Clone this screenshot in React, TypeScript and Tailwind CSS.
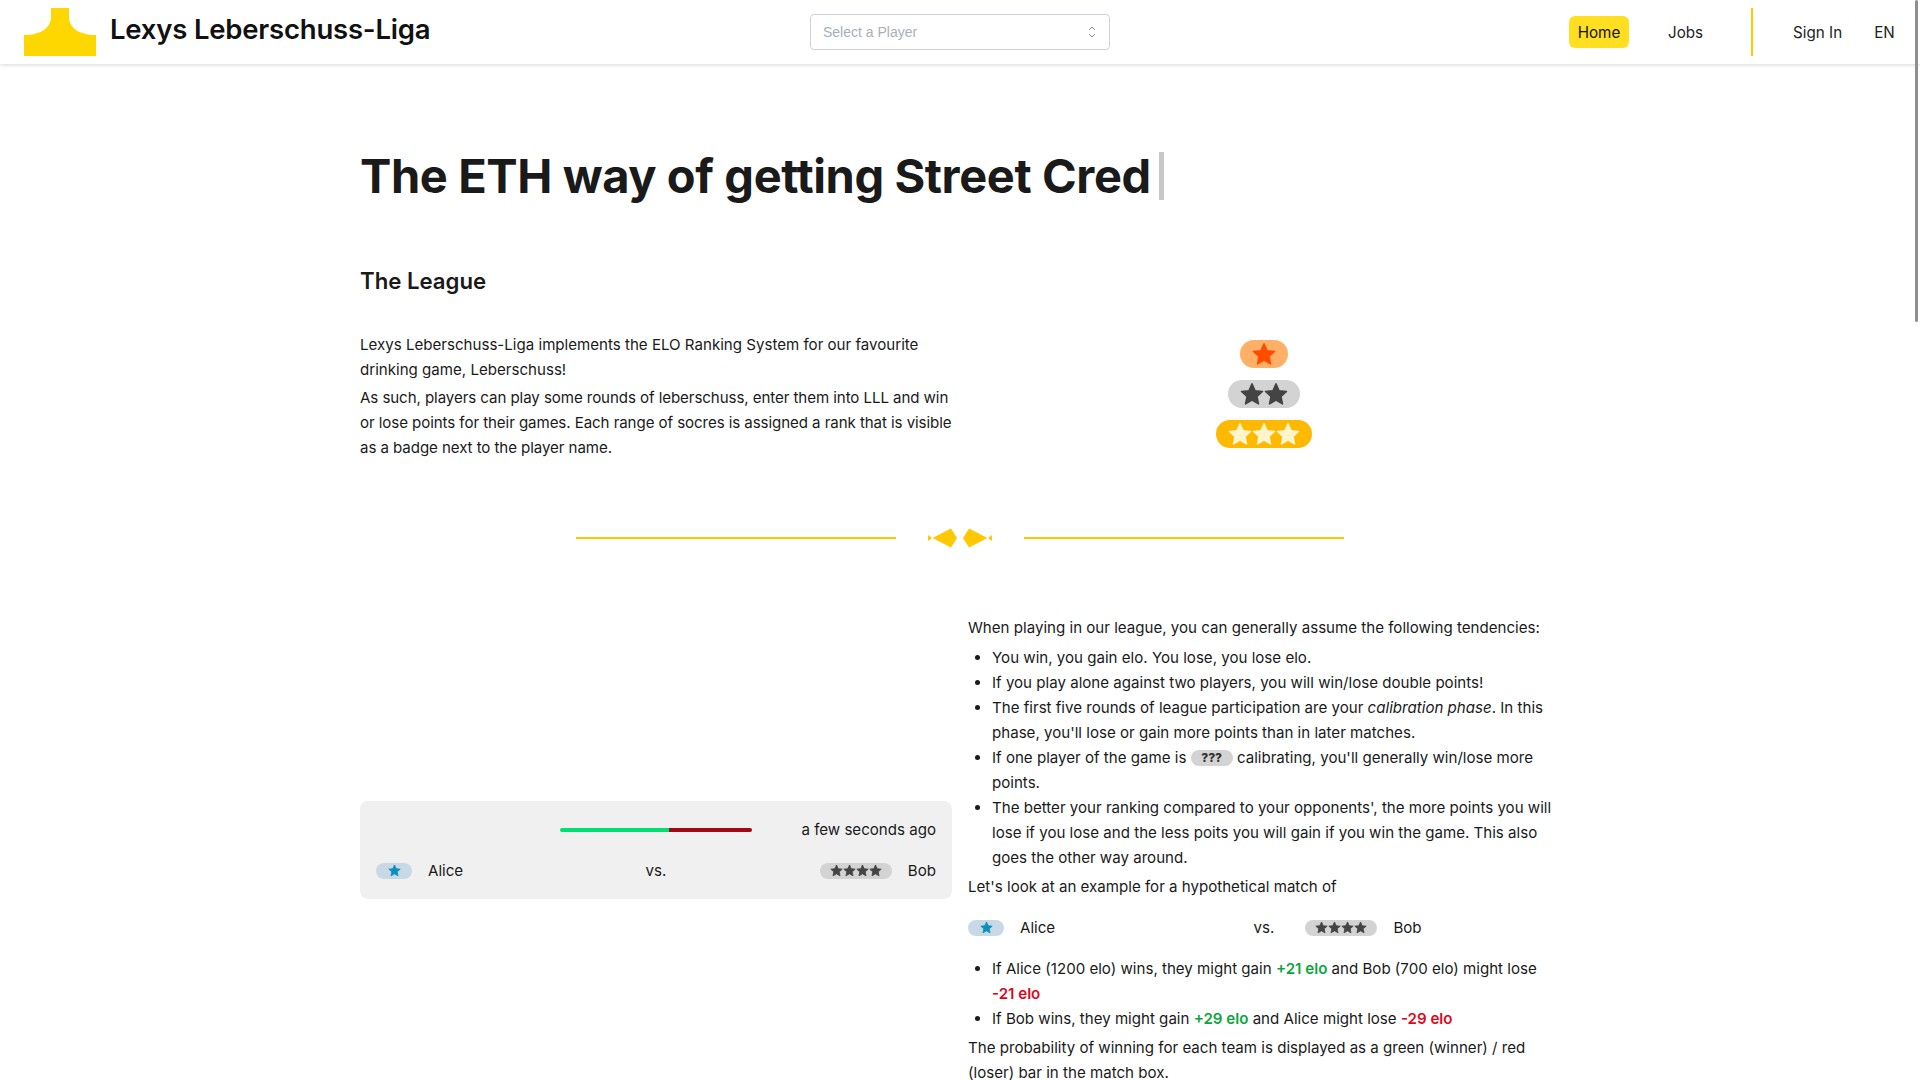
import React from "react";

const STAR = "M12 1.8l3.1 6.9 7.4.8-5.5 5 1.5 7.4L12 18.2l-6.5 3.7 1.5-7.4-5.5-5 7.4-.8z";

function Star({ size, color }: { size: number; color: string }) {
  return (
    <svg width={size} height={size} viewBox="0 0 24 24" className="block shrink-0">
      <path d={STAR} fill={color} stroke={color} strokeWidth="1.5" strokeLinejoin="round" />
    </svg>
  );
}

function BigBadge({ n, bg, color, w }: { n: number; bg: string; color: string; w: string }) {
  return (
    <div className={`flex h-7 items-center justify-center rounded-full ${bg} ${w}`}>
      {Array.from({ length: n }).map((_, i) => (
        <Star key={i} size={24} color={color} />
      ))}
    </div>
  );
}

function Alice() {
  return (
    <div className="flex items-center">
      <span className="flex h-4 w-9 items-center justify-center rounded-full bg-[#c9d8e5]">
        <Star size={13} color="#0b8fbd" />
      </span>
      <span className="ml-4">Alice</span>
    </div>
  );
}

function Bob() {
  return (
    <div className="flex items-center">
      <span className="flex h-4 w-[72px] items-center justify-center rounded-full bg-[#d3d3d3]">
        {[0, 1, 2, 3].map((i) => (
          <Star key={i} size={13} color="#444444" />
        ))}
      </span>
      <span className="ml-4">Bob</span>
    </div>
  );
}

function Diamond({ flip }: { flip?: boolean }) {
  return (
    <svg width="30" height="20" viewBox="0 0 30 20" className={`block ${flip ? "-scale-x-100" : ""}`}>
      <path d="M0 7L4 10 0 13zM4.500 10L23 .500 29 10 23 19.500z" fill="#ffc800" />
    </svg>
  );
}

export default function App() {
  return (
    <div className="relative h-screen overflow-hidden bg-white font-['Inter','Liberation_Sans',sans-serif] text-[15.100px] leading-[25px] text-[#1a1a1a]">
      <header className="relative flex h-16 items-center justify-between pl-6 pr-6 shadow-[0_1px_4px_rgba(0,0,0,0.16)]">
        <div className="flex w-[786px] items-center">
          <svg width="72" height="48" viewBox="0 0 72 48" className="block">
            <path d="M27 0h18v9c0 10 9 18 27 18v21H0V27c18 0 27-8 27-18z" fill="#ffd700" />
          </svg>
          <span className="mb-[5px] ml-[14px] text-[27.500px] font-semibold tracking-[-0.200px] text-[#111111]">Lexys Leberschuss-Liga</span>
        </div>
        <div className="relative flex h-9 w-[300px] shrink-0 items-center rounded border border-[#ccd1d9] px-3 font-['Liberation_Sans',sans-serif] text-sm text-[#a9afb9]">
          Select a Player
          <svg width="10" height="14" viewBox="0 0 10 14" fill="none" stroke="#8a8f98" strokeWidth="1" className="absolute right-[12px] top-[10px]">
            <path d="M2 5l3-3 3 3M2 9l3 3 3-3" />
          </svg>
        </div>
        <nav className="flex flex-1 items-center pl-[459px] text-[15.200px] text-[#222222]">
          <span className="flex h-8 w-[60px] items-center justify-center rounded-md bg-[#ffdf1f] text-[#111111]">Home</span>
          <span className="ml-[39px]">Jobs</span>
          <span className="ml-12 h-12 w-0.5 bg-[#ffc800]" />
          <span className="ml-10">Sign In</span>
          <span className="ml-8">EN</span>
        </nav>
      </header>

      <main className="mx-auto w-[1200px]">
        <h1 className="mt-[82px] flex items-center text-[47px] font-bold leading-[60px] tracking-[-0.400px] text-[#1a1a1a]">
          The ETH way of getting Street Cred
          <span className="ml-2 h-12 w-[5px] bg-[#c8c8c8]" />
        </h1>

        <h2 className="mt-[59px] text-[22.200px] font-semibold leading-8 text-[#1a1a1a]">The League</h2>

        <section className="mt-[35px] grid grid-cols-2 items-center gap-4">
          <div>
            <p>Lexys Leberschuss-Liga implements the ELO Ranking System for our favourite drinking game, Leberschuss!</p>
            <p className="mt-[3px] tracking-[-0.080px]">As such, players can play some rounds of leberschuss, enter them into LLL and win or lose points for their games. Each range of socres is assigned a rank that is visible as a badge next to the player name.</p>
          </div>
          <div className="flex flex-col items-center gap-3 pb-[5px]">
            <BigBadge n={1} bg="bg-[#ffb066]" color="#ff4d00" w="w-12" />
            <BigBadge n={2} bg="bg-[#d3d3d3]" color="#444444" w="w-[72px]" />
            <BigBadge n={3} bg="bg-[#ffb900]" color="#fff5cc" w="w-24" />
          </div>
        </section>

        <div className="mt-[68px] flex items-center justify-center">
          <div className="h-0.5 w-80 bg-[#ffc800]" />
          <div className="mx-8 flex w-16 justify-between">
            <Diamond />
            <Diamond flip />
          </div>
          <div className="h-0.5 w-80 bg-[#ffc800]" />
        </div>

        <section className="mt-[67px] grid grid-cols-2 items-center gap-4">
          <div className="rounded-lg bg-[#f0f0f0] px-4 py-4">
            <div className="grid grid-cols-[1fr_192px_1fr] items-center">
              <div />
              <div className="flex h-1 overflow-hidden rounded-full">
                <div className="w-[57%] bg-[#00e070]" />
                <div className="flex-1 bg-[#a30815]" />
              </div>
              <div className="text-right">a few seconds ago</div>
            </div>
            <div className="mt-4 grid grid-cols-3 items-center">
              <Alice />
              <div className="text-center">vs.</div>
              <div className="flex justify-end"><Bob /></div>
            </div>
          </div>

          <div>
            <p>When playing in our league, you can generally assume the following tendencies:</p>
            <ul className="mt-[5px] list-disc pl-6">
              <li>You win, you gain elo. You lose, you lose elo.</li>
              <li>If you play alone against two players, you will win/lose double points!</li>
              <li>The first five rounds of league participation are your <em>calibration phase</em>. In this phase, you'll lose or gain more points than in later matches.</li>
              <li>
                If one player of the game is{" "}
                <span className="inline-flex h-4 w-[42px] items-center justify-center rounded-full bg-[#d3d3d3] align-[1px] text-[12px] font-extrabold leading-none text-[#333333]">???</span>{" "}
                calibrating, you'll generally win/lose more points.
              </li>
              <li>The better your ranking compared to your opponents', the more points you will lose if you lose and the less poits you will gain if you win the game. This also goes the other way around.</li>
            </ul>
            <p className="mt-1">Let's look at an example for a hypothetical match of</p>
            <div className="mt-4 grid grid-cols-[1fr_auto_1fr] items-center gap-x-[31px]">
              <Alice />
              <div className="text-center">vs.</div>
              <Bob />
            </div>
            <ul className="mt-4 list-disc pl-6">
              <li>If Alice (1200 elo) wins, they might gain <span className="font-semibold text-[#0aa63c]">+21 elo</span> and Bob (700 elo) might lose <span className="font-semibold text-[#e0061c]">-21 elo</span></li>
              <li>If Bob wins, they might gain <span className="font-semibold text-[#0aa63c]">+29 elo</span> and Alice might lose <span className="font-semibold text-[#e0061c]">-29 elo</span></li>
            </ul>
            <p className="mt-1">The probability of winning for each team is displayed as a green (winner) / red (loser) bar in the match box.</p>
          </div>
        </section>
      </main>

      <div className="absolute right-[2px] top-0 h-[322px] w-[3px] rounded-full bg-[#8f8f8f]" />
    </div>
  );
}
